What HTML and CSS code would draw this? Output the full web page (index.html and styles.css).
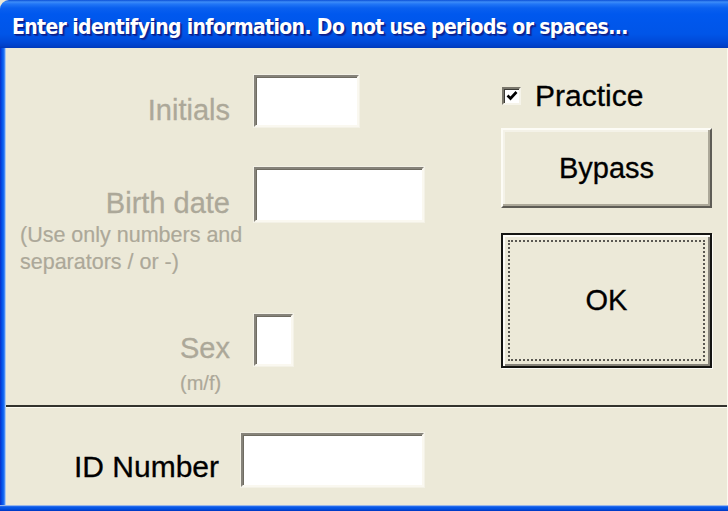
FILE: index.html
```html
<!DOCTYPE html>
<html lang="en">
<head>
<meta charset="utf-8">
<title>Enter identifying information</title>
<link rel="stylesheet" href="styles.css">
</head>
<body>
<div class="window">
  <div class="titlebar">
    <span class="title">Enter identifying information. Do not use periods or spaces...</span>
  </div>
  <div class="frame">
    <div class="upper">
      <div class="form">
        <div class="row row-initials">
          <div class="label"><span class="lbl dim">Initials</span></div>
          <div class="field f-initials"></div>
        </div>
        <div class="row row-birth">
          <div class="label">
            <span class="lbl dim">Birth date</span>
            <div class="hint">(Use only numbers and<br>separators / or -)</div>
          </div>
          <div class="field f-birth"></div>
        </div>
        <div class="row row-sex">
          <div class="label">
            <span class="stack">
              <span class="lbl dim">Sex</span>
              <span class="sub">(m/f)</span>
            </span>
          </div>
          <div class="field f-sex"></div>
        </div>
      </div>
      <div class="side">
        <div class="check-row">
          <span class="checkbox">
            <svg width="14" height="14" viewBox="0 0 14 14"><polyline points="2.5,6.5 5.5,9.5 11.5,3" fill="none" stroke="#000" stroke-width="2.6"/></svg>
          </span>
          <span class="check-label">Practice</span>
        </div>
        <button class="btn bypass" type="button">Bypass</button>
        <button class="btn ok" type="button"><span class="focus">OK</span></button>
      </div>
    </div>
    <div class="divider"></div>
    <div class="lower">
      <div class="label id-label"><span class="lbl big">ID Number</span></div>
      <div class="field f-id"></div>
    </div>
  </div>
</div>
</body>
</html>
```
FILE: styles.css
```css
html, body {
  margin: 0;
  padding: 0;
}
body {
  width: 728px;
  height: 511px;
  overflow: hidden;
  background: #ECE9D8;
  font-family: "Liberation Sans", Arial, sans-serif;
}
.window {
  display: flex;
  flex-direction: column;
  height: 511px;
}
.titlebar {
  height: 48px;
  flex: none;
  box-sizing: border-box;
  border-top-left-radius: 9px;
  background: linear-gradient(to bottom, #0b4fd6 0, #3d8df8 2px, #2276f6 4px, #0a60ef 8px, #0058ee 14px, #0055e8 34px, #0049d8 42px, #0040c8 46px, #0038b8 48px);
  display: flex;
  align-items: center;
  padding-left: 12px;
  padding-top: 6px;
}
.title {
  color: #fff;
  font-family: "Liberation Sans Narrow", "DejaVu Sans Condensed", sans-serif;
  font-weight: bold;
  font-size: 21px;
  letter-spacing: -0.65px;
  white-space: nowrap;
  text-shadow: 1px 1px 0 #0a1e8c, 2px 2px 1px #0b2a9e;
}
.frame {
  flex: 1;
  display: flex;
  flex-direction: column;
  padding: 0 1px 6px 6px;
  background:
    linear-gradient(to bottom, #f4f2e4 0, #3a7af0 1px, #0a5ae8 2px, #0050e0 4px, #0034c0 6px) left bottom / 100% 6px no-repeat,
    linear-gradient(to right, #0a2cc8 0, #0052ea 2px, #1e6ff3 4px, #6aa4f8 5px, #e9ecec 6px) left top / 6px 100% no-repeat,
    linear-gradient(#fcfaf0, #fcfaf0) right top / 1px 100% no-repeat,
    #ECE9D8;
}
.upper {
  height: 357px;
  display: flex;
  flex: none;
}
.form {
  width: 495px;
  padding-top: 27px;
  box-sizing: border-box;
}
.row {
  display: flex;
  align-items: flex-start;
  gap: 24px;
}
.label {
  width: 224px;
  flex: none;
  text-align: right;
}
.lbl {
  font-size: 29px;
  line-height: 32px;
  color: #000;
  white-space: nowrap;
  -webkit-text-stroke: 0.3px currentColor;
}
.big {
  font-size: 30px;
}
.dim {
  color: #ACA899;
}
.row-initials .label { padding-top: 19px; }
.row-birth { margin-top: 40px; }
.row-birth .label { padding-top: 20px; }
.row-sex { margin-top: 38px; }
.row-sex .label { padding-top: 18px; }
.hint {
  text-align: left;
  margin: 3px 0 0 14px;
  font-size: 21.5px;
  line-height: 27px;
  color: #ACA899;
  white-space: nowrap;
  -webkit-text-stroke: 0.2px currentColor;
}
.stack {
  display: inline-flex;
  flex-direction: column;
  align-items: flex-start;
  text-align: left;
}
.sub {
  font-size: 20px;
  line-height: 24px;
  margin-top: 7px;
  color: #ACA899;
  -webkit-text-stroke: 0.2px currentColor;
}
.field {
  flex: none;
  box-sizing: border-box;
  background: #fff;
  border: 2px solid;
  border-color: #86837a #faf8f0 #faf8f0 #86837a;
  box-shadow: inset 1px 1px 0 #6f6c62, 0 0 0 1px #f3f1e6;
}
.f-initials { width: 105px; height: 52px; }
.f-birth { width: 170px; height: 55px; }
.f-sex { width: 39px; height: 52px; }
.f-id { width: 183px; height: 54px; }
.side {
  display: flex;
  flex-direction: column;
  align-items: flex-start;
  padding-top: 32px;
}
.check-row {
  display: flex;
  align-items: center;
  gap: 14px;
  height: 32px;
  padding-left: 1px;
}
.checkbox {
  width: 19px;
  height: 18px;
  box-sizing: border-box;
  background: #fff;
  border: 2px solid;
  border-color: #7a776c #f6f4ea #f6f4ea #7a776c;
  box-shadow: inset 1px 1px 0 #3c3b36;
  display: flex;
  align-items: center;
  justify-content: center;
}
.checkbox svg { display: block; }
.check-label {
  font-size: 30px;
  line-height: 32px;
  color: #000;
  -webkit-text-stroke: 0.3px currentColor;
}
.btn {
  box-sizing: border-box;
  width: 211px;
  margin: 0;
  padding: 0;
  background: #ECE9D8;
  font-family: "Liberation Sans", Arial, sans-serif;
  font-size: 29px;
  color: #000;
  -webkit-text-stroke: 0.3px currentColor;
  display: flex;
  align-items: center;
  justify-content: center;
}
.bypass {
  height: 80px;
  margin-top: 16px;
  border: 2px solid;
  border-color: #fdfcf6 #5e5c55 #5e5c55 #fdfcf6;
  box-shadow: inset -2px -2px 0 #aca899, inset 2px 2px 0 #f4f2e8;
}
.ok {
  height: 135px;
  margin-top: 25px;
  border: 2px solid #151512;
  box-shadow: inset 2px 2px 0 #fdfcf6, inset -2px -2px 0 #86837a, 1px 1px 0 #fdfcf6;
  padding: 5px;
}
.focus {
  flex: 1;
  align-self: stretch;
  display: flex;
  align-items: center;
  justify-content: center;
  border: 2px dotted #5a5852;
}
.divider {
  flex: none;
  height: 3px;
  box-sizing: border-box;
  border-top: 2px solid #33332d;
  border-bottom: 1px solid #fdfbf0;
}
.lower {
  flex: 1;
  display: flex;
  align-items: flex-start;
  gap: 22px;
  padding-top: 25px;
}
.id-label {
  width: 213px;
  padding-top: 18px;
}
```
